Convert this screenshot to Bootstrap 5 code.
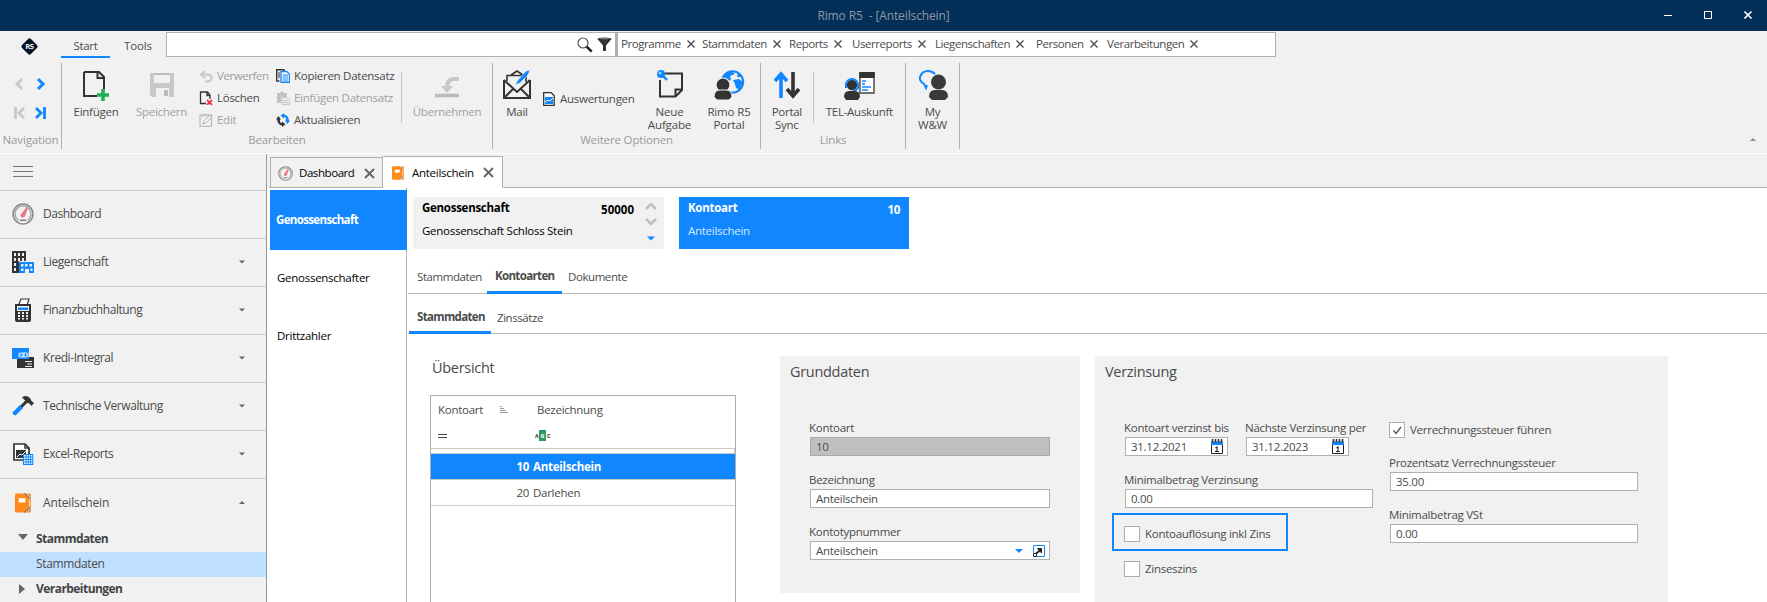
<!DOCTYPE html>
<html lang="de">
<head>
<meta charset="utf-8">
<meta name="viewport" content="width=device-width, initial-scale=1">
<title>Rimo R5 - [Anteilschein]</title>
<link href="https://cdn.jsdelivr.net/npm/bootstrap@5.3.0/dist/css/bootstrap.min.css" rel="stylesheet">
<style>
:root{--blue:#1086ff;--ink:#4b4b4b;--line:#b0b0b0;--soft:#f1f1f1}
body{font:11.5px/16px "Open Sans","Noto Sans",sans-serif;letter-spacing:-.27px;color:var(--ink);background:var(--soft);height:602px;overflow:hidden}
svg{display:block;flex:none}
.tight{letter-spacing:-.6px}
.snug{letter-spacing:-.43px}
.wide-set{letter-spacing:-.15px}
.titlebar{height:31px;background:#042f59;color:#8d98a2}
.titlebar .wintitle{flex:1;text-align:center;line-height:31px;padding-left:158px;font-size:12px;letter-spacing:-.12px}
.wincontrols{width:158px;gap:31px;padding:9px 0 0 55px;height:31px}
.toprow{height:32px;padding-top:1px}
.logo{width:61px;padding:5px 0 0 20px}
.toptab{height:26px;padding:6px 0 0;text-align:center;border-bottom:2px solid transparent}
.toptab.active{border-color:var(--blue)}
.searchbox{width:450px;height:25px;background:#fff;border:1px solid var(--line);padding:4px 3px 0 0}
.quick{width:660px;height:25px;background:#fff;border:1px solid var(--line);border-left-width:2px;padding:3px 0 0 3px;white-space:nowrap;letter-spacing:-.43px}
.quick div{display:flex;align-items:center;height:16px}
.quick svg{margin-left:6px}
.ribbon{height:90px}
.grp{height:86px;border-right:1px solid var(--line);position:relative;display:flex}
.grp .cap{position:absolute;left:0;right:0;top:69px;text-align:center;color:#9a9a9a;letter-spacing:-.15px}
.big{text-align:center;line-height:13px;padding-top:6px;color:var(--ink);white-space:nowrap}
.big svg{margin:0 auto 4px}
.off{color:#a0a0a0!important}
.stack{padding-top:2px;line-height:22px;white-space:nowrap}
.stack div{display:flex;align-items:center;height:22px}
.vsep{width:1px;height:51px;margin-top:9px;background:#c4c4c4}
.main{height:449px;border-top:1px solid #fff}
.side{width:267px;border-right:1px solid #999;height:448px;flex:none}
.side .burger{height:37px;border-bottom:1px solid #d0d0d0;padding:12px 13px}
.side .entry{height:48px;border-bottom:1px solid #d0d0d0;display:flex;align-items:center;padding:0 0 1px 12px;font-size:12px;letter-spacing:-.43px}
.side .entry svg:first-child{margin-right:9px}
.side .entry .caret{margin:0 21px 0 auto}
.side .sub{height:25px;display:flex;align-items:center;font-size:12px;letter-spacing:-.35px;padding:0 0 1px 36px}
.side .sub.picked{background:#bfe0ff}
.side .sub b{color:#444;letter-spacing:-.55px}
.side .sub.parent{padding-left:17px}
.side .sub.parent svg{margin-right:7px}
.content{flex:1;min-width:0;display:flex;flex-direction:column}
.doctabs{height:34px;padding:2px 0 0 2px}
.doctabs .dt{border:1px solid var(--line);color:#000;display:flex;align-items:center;white-space:nowrap}
.dt1{height:31px;width:113px;margin-top:1px;padding:1px 0 0 7px}
.dt2{height:32px;width:120px;background:#fff;border-bottom-color:#fff!important;border-left:0!important;padding:1px 0 0 9px}
.doctabs .rest{flex:1;height:32px;border-bottom:1px solid var(--line)}
.doctabs .edge{width:1px;height:32px;border-bottom:1px solid var(--line)}
.body-area{background:#fff;flex:1;min-height:0;overflow:hidden}
.levels{width:140px;flex:none;border-right:1px solid #b4b4b4;padding:2px 0 0 3px;color:#000}
.levels div{height:58px;padding:20px 0 0 7px}
.levels .now{height:60px;background:var(--blue);color:#fff;font-weight:700;padding:22px 0 0 6px;margin-right:-1px;letter-spacing:-.65px}
.work{flex:1;min-width:0}
.infocards{padding:9px 0 0 6px;gap:15px}
.info{height:52px;padding:3px 9px}
.info .under{padding-top:7px}
.tabline{border-bottom:1px solid #b8b8b8;margin-left:1px;white-space:nowrap;letter-spacing:-.43px}
.tabline div{border-bottom:3px solid transparent;margin-bottom:-1px}
.tabline .active{border-color:var(--blue);font-weight:700;letter-spacing:-.65px}
.head{font-size:14.5px;line-height:18px;letter-spacing:-.3px;height:20px}
.grid-box{width:306px;height:240px;border:1px solid #adadad;background:#fff}
.panelbox{background:#f1f1f1;padding:7px 10px 0;flex:none}
.lab{height:16px;line-height:16px;white-space:nowrap;margin:0 0 1px -1px}
.fld{height:19px;line-height:17px;border:1px solid var(--line);background:#fff;padding:0 5px;display:flex;align-items:center;justify-content:space-between}
.fld.ro{background:#bfbfbf;border-color:#aaa}
.fgap{margin-bottom:16px}
.chk{width:16px;height:16px;border:1px solid #adadad;background:#fff;flex:none;margin-right:5px}
.ring{border:2px solid var(--blue);width:176px;height:38px;margin:5px 0 0 -13px;padding:3px 0 0 10px}
</style>
</head>
<body>
<svg width="0" height="0" class="position-absolute">
<defs>
<symbol id="x" viewBox="0 0 8 8"><path d="M.5.5l7 7M7.500.5l-7 7" stroke="#4a4a4a" stroke-width="1.400" fill="none"/></symbol>
<symbol id="xl" viewBox="0 0 11 11"><path d="M1 1l9 9M10 1l-9 9" stroke="#666" stroke-width="1.900" fill="none"/></symbol>
<symbol id="down" viewBox="0 0 6 4"><path d="M0 .5h6L3 3.500z" fill="#666"/></symbol>
<symbol id="drop" viewBox="0 0 8 4"><path d="M0 0h8L4 4z" fill="#1086ff"/></symbol>
<symbol id="gauge" viewBox="0 0 22 22"><circle cx="11" cy="11" r="10" fill="none" stroke="#888" stroke-width="1.500"/><path d="M6.500 17.500a8 8 0 1 1 9 0" fill="none" stroke="#999" stroke-width="1.300"/><path d="M14.600 4.200l1.400.6-3 8a2.200 2.200 0 1 1-3.400-2.300z" fill="#ec7384"/><path d="M8 17.300h6" stroke="#777" stroke-width="1.400"/></symbol>
<symbol id="folder" viewBox="0 0 17 21"><path d="M.8.5h10L15 5v11l-4.200 4.500H.8L0 19.700V1.300z" fill="#ff8c1a"/><path d="M12.500.5H17v5zM17 15.500v5h-4.500zM15.700 6H17v9h-1.300z" fill="#ffa54a"/><path d="M10.500.5l6 6M10.500 20.500l6-6" stroke="#555" stroke-width="1.100" stroke-dasharray="2 .6"/><path d="M13.500.5l3 3M13.500 20.500l3-3" stroke="#777" stroke-width=".7"/><rect x="4" y="5.500" width="7" height="4.500" fill="#fff"/></symbol>
<symbol id="cal" viewBox="0 0 12 15"><path d="M.5 6v8.500h11V6" fill="#fff" stroke="#222"/><path d="M0 2.500h12V6H0z" fill="#1086ff"/><path d="M1.500 0v3.500M4.500 0v3.500M7.500 0v3.500M10.500 0v3.500" stroke="#333" stroke-width="1.600"/><path d="M4.500 9l1.500-1v4.500M4 12.500h4" stroke="#222" fill="none" stroke-width="1.100"/></symbol>
</defs>
</svg>

<header class="titlebar d-flex">
 <div class="wintitle">Rimo R5&nbsp; - [Anteilschein]</div>
 <div class="wincontrols d-flex">
  <svg width="9" height="12"><path d="M0 6.500h8" stroke="#fff"/></svg>
  <svg width="9" height="12"><path d="M.5 2.500h7v7h-7z" stroke="#fff" fill="none"/></svg>
  <svg width="9" height="12"><path d="M.5 2.500l7 7m0-7l-7 7" stroke="#fff" stroke-width="1.600"/></svg>
 </div>
</header>

<nav class="toprow d-flex">
 <div class="logo"><svg width="19" height="19" viewBox="0 0 19 19"><rect x="3.200" y="3.200" width="12.600" height="12.600" rx="2" transform="rotate(45 9.500 9.500)" fill="#061427"/><text x="9.500" y="12.300" text-anchor="middle" font-family="Open Sans" font-weight="700" font-size="7.500" fill="#e8eef5">R5</text></svg></div>
 <div class="toptab active" style="width:49px">Start</div>
 <div class="toptab wide-set" style="width:56px">Tools</div>
 <div class="searchbox d-flex justify-content-end">
  <svg width="16" height="16" viewBox="0 0 16 16"><circle cx="6" cy="6" r="5" fill="#fff" stroke="#555" stroke-width="1.200"/><path d="M9.700 9.700l5 5" stroke="#222" stroke-width="2.600"/></svg>
  <svg class="ms-1" width="15" height="15" viewBox="0 0 15 15"><path d="M.5 2h14L9 8.500V14H6V8.500z" fill="#333"/><ellipse cx="7.500" cy="2" rx="7" ry="1.500" fill="#333"/><ellipse cx="7.500" cy="1.700" rx="4.500" ry=".6" fill="#888"/></svg>
 </div>
 <div class="quick d-flex">
  <div style="width:81px">Programme<svg width="8" height="8"><use href="#x"/></svg></div>
  <div style="width:87px">Stammdaten<svg width="8" height="8"><use href="#x"/></svg></div>
  <div style="width:63px">Reports<svg width="8" height="8"><use href="#x"/></svg></div>
  <div style="width:83px">Userreports<svg width="8" height="8"><use href="#x"/></svg></div>
  <div style="width:101px">Liegenschaften<svg width="8" height="8"><use href="#x"/></svg></div>
  <div style="width:71px">Personen<svg width="8" height="8"><use href="#x"/></svg></div>
  <div>Verarbeitungen<svg width="8" height="8"><use href="#x"/></svg></div>
 </div>
</nav>

<section class="ribbon d-flex">
 <div class="grp" style="width:62px">
  <svg width="61" height="62" viewBox="0 0 61 62" fill="none"><path d="M22 16l-5 5 5 5" stroke="#c8c8c8" stroke-width="2.800"/><path d="M38 16l5 5-5 5" stroke="#1086ff" stroke-width="3"/><path d="M24 45l-5 5 5 5M15.500 44v12" stroke="#c8c8c8" stroke-width="2.800"/><path d="M36 45l5 5-5 5M44.500 44v12" stroke="#1086ff" stroke-width="2.800"/></svg>
  <div class="cap">Navigation</div>
 </div>
 <div class="grp" style="width:431px">
  <div class="big" style="width:68px"><svg width="28" height="32" viewBox="0 0 28 32"><path d="M2 3h15l5 5v12M15 27H2V3M15.500 3v6h6" fill="none" stroke="#333" stroke-width="2"/><path d="M21 20v12M15 26h12" stroke="#1fae54" stroke-width="3.600"/></svg>Einfügen</div>
  <div class="big off" style="width:63px"><svg width="24" height="32" viewBox="0 0 24 32"><path d="M0 4h24v24H2l-2-2z" fill="#c8c8c8"/><path d="M4 4h16v10H4zM6 19h13v9H6z" fill="#f1f1f1"/><path d="M4 4h16v2H4zM14 21h4v6h-4z" fill="#bbb"/></svg>Speichern</div>
  <div class="stack" style="width:77px;padding-left:6px">
   <div class="off snug"><svg class="me-1" width="14" height="14" viewBox="0 0 14 14"><path d="M6 2L2 5.500 6 9M2 5.500h7a3 3 0 0 1 0 7H6" fill="none" stroke="#c8c8c8" stroke-width="2"/></svg>Verwerfen</div>
   <div><svg class="me-1" width="14" height="14" viewBox="0 0 14 14"><path d="M7 12.500H1.500V1h7L11 4v4M8 1v3.500h3" fill="none" stroke="#333" stroke-width="1.300"/><path d="M8 9l5 5m0-5l-5 5" stroke="#ee3347" stroke-width="1.800"/></svg>Löschen</div>
   <div class="off"><svg class="me-1" width="14" height="14" viewBox="0 0 14 14"><path d="M1 2h11.500v11.500H1z" fill="none" stroke="#c0c0c0" stroke-width="1.300"/><path d="M3 1v3M6 1v3M9 1v3" stroke="#c0c0c0"/><path d="M4 11l1-3 6-6 2 2-6 6z" fill="#f1f1f1" stroke="#b4b4b4"/></svg>Edit</div>
  </div>
  <div class="stack" style="width:131px;padding-left:6px">
   <div><svg class="me-1" width="14" height="14" viewBox="0 0 14 14"><path d="M3.500 12H.7V.7h7L9 2" fill="none" stroke="#333" stroke-width="1.400"/><path d="M2 4h2M2 6h2M2 8h2" stroke="#333"/><path d="M5 2.700h6L13.400 5v8.400H5z" fill="#fff" stroke="#1086ff" stroke-width="1.300"/><path d="M6.500 6h5.500M6.500 8h5.500M6.500 10h5.500M6.500 12h5.500" stroke="#1086ff"/></svg>Kopieren Datensatz</div>
   <div class="off"><svg class="me-1" width="14" height="14" viewBox="0 0 14 14"><path d="M1 2h3l2-2 2 2h3v4H5v6H1z" fill="#c2c2c2"/><path d="M6 6.600h5L13.400 9v4.400H6z" fill="#f1f1f1" stroke="#c2c2c2"/><path d="M7 9.500h5M7 11.500h5" stroke="#c2c2c2"/></svg>Einfügen Datensatz</div>
   <div><svg class="me-1" width="14" height="14" viewBox="0 0 14 14"><path d="M7 2.500a4.500 4.500 0 0 1 4.500 4.500v1" stroke="#1086ff" stroke-width="2.600" fill="none"/><path d="M8 0v5.500L4.500 2.700zM9 7.500h5l-2.500 3.500z" fill="#1086ff"/><path d="M7 11.500A4.500 4.500 0 0 1 2.500 7V6" stroke="#333" stroke-width="2.600" fill="none"/><path d="M6 8.500V14l3.500-2.700zM5 6.500H0L2.500 3z" fill="#333"/></svg>Aktualisieren</div>
  </div>
  <div class="vsep"></div>
  <div class="big off" style="width:90px"><svg width="26" height="32" viewBox="0 0 26 32"><path d="M1 26.500h24" stroke="#bbb" stroke-width="3.600"/><path d="M25 10h-5q-7 0-7 8" fill="none" stroke="#c8c8c8" stroke-width="4"/><path d="M7 17h12l-6 7z" fill="#c8c8c8"/></svg>Übernehmen</div>
  <div class="cap">Bearbeiten</div>
 </div>
 <div class="grp" style="width:268px">
  <div class="big" style="width:48px"><svg width="28" height="32" viewBox="0 0 28 32"><path d="M1 11v18h26V11M1 11l13 12 13-12M1 29l9-9M27 29l-9-9" fill="none" stroke="#333" stroke-width="2"/><path d="M4 12V6.500h19V13M8 6l6-4 6 4" fill="none" stroke="#333" stroke-width="1.600"/><path d="M12 16l3-5 8-9 4-1-2 5-8 8z" fill="#1086ff" stroke="#f1f1f1" stroke-width=".6"/></svg>Mail</div>
  <div class="d-flex align-items-center" style="width:100px;height:72px;padding-left:2px"><svg width="12" height="14" viewBox="0 0 12 14"><path d="M.7.700h7.500l3 3v9.600H.7z" fill="#fff" stroke="#333" stroke-width="1.300"/><path d="M2 5h8v7H2z" fill="#1086ff"/><path d="M2 10l3-2 2 1 3-3" stroke="#fff" fill="none"/></svg><span class="ms-1" style="padding-left:1px">Auswertungen</span></div>
  <div class="big wide-set" style="width:57px"><svg width="28" height="32" viewBox="0 0 28 32"><path d="M9 4.500h17V21l-6.500 6.500H4V11M26 20.500h-6.500v7" fill="none" stroke="#333" stroke-width="2"/><circle cx="5" cy="5" r="4" fill="#1086ff"/><path d="M7 7l4 4" stroke="#1086ff" stroke-width="2.400"/><circle cx="4" cy="4" r="1.500" fill="#9ccfff"/></svg>Neue<br>Aufgabe</div>
  <div class="big wide-set" style="width:62px"><svg width="32" height="32" viewBox="0 0 32 32"><circle cx="19.500" cy="13" r="10.700" fill="#f1f1f1" stroke="#1086ff" stroke-width="2"/><path d="M10 7q5-5 9-4l3 2-5 2 1 4-5 2-4-3zM20 11l6-1 4 3-3 8-4-2-1-4zM25 4l4 4-5 0z" fill="#1086ff"/><circle cx="10" cy="16" r="7" fill="#333" stroke="#f1f1f1" stroke-width="1.200"/><path d="M1 28q0-7 6-7h6q6 0 6 7l-3 3H4z" fill="#333" stroke="#f1f1f1"/></svg>Rimo R5<br>Portal</div>
  <div class="cap">Weitere Optionen</div>
 </div>
 <div class="grp" style="width:145px">
  <div class="big" style="width:52px"><svg width="28" height="32" viewBox="0 0 28 32"><path d="M20 3v22" stroke="#333" stroke-width="3.600"/><path d="M8 29V6M2 12l6-7 6 7" fill="none" stroke="#1086ff" stroke-width="3.600"/><path d="M14 20l6 7 6-7" fill="none" stroke="#333" stroke-width="3.600"/></svg>Portal<br>Sync</div>
  <div class="vsep"></div>
  <div class="big" style="width:92px"><svg width="32" height="32" viewBox="0 0 32 32"><path d="M17 4h14v20H17z" fill="#fff" stroke="#444" stroke-width="1.400"/><path d="M16.300 3h15.400v6H16.300z" fill="#333"/><path d="M19 12h4M19 15h3M19 18h9M19 21h6" stroke="#1086ff" stroke-width="1.300"/><circle cx="9" cy="16" r="5.200" fill="#333"/><path d="M3 16a6 6 0 0 1 12 0M3 14v5M15 14v5q-2 3-5 2" fill="none" stroke="#1086ff" stroke-width="2"/><path d="M1 28q0-6 5-6h6q5 0 5 6l-2 3H3z" fill="#333"/></svg>TEL-Auskunft</div>
  <div class="cap">Links</div>
 </div>
 <div class="grp" style="width:54px">
  <div class="big" style="width:53px"><svg width="30" height="32" viewBox="0 0 30 32"><path d="M9 16l-1 3-2-4Q1 12 2 8q2-6 8-6 4 0 7 3" fill="none" stroke="#1086ff" stroke-width="2"/><circle cx="20.500" cy="13" r="7.500" fill="#3a3a3a"/><path d="M11 28q0-7 6-7h7q6 0 6 7l-3 3H14z" fill="#3a3a3a"/></svg>My<br>W&amp;W</div>
 </div>
 <div class="flex-grow-1 d-flex justify-content-end align-items-end" style="padding:0 11px 11px 0"><svg width="6" height="4"><path d="M0 3h6L3 0z" fill="#888"/></svg></div>
</section>

<main class="main d-flex">
 <aside class="side">
  <div class="burger"><svg width="20" height="12"><path d="M0 .5h20M0 5.500h20M0 10.500h20" stroke="#777"/></svg></div>
  <div class="entry"><svg width="22" height="22"><use href="#gauge"/></svg>Dashboard</div>
  <div class="entry"><svg width="22" height="22" viewBox="0 0 22 22"><path d="M0 0h14v10H7v12H0z" fill="#333"/><path d="M2 2h2v3H2zM6 2h2v3H6zM10 2h2v3h-2zM2 7h2v3H2zM6 7h2v3H6zM10 7h2v3h-2zM2 12h2v3H2zM2 17h2v3H2z" fill="#f1f1f1"/><path d="M7 11h15v11h-5v-4h-4v4H7z" fill="#1086ff"/><path d="M9 13h2.500v2.500H9zM13 13h2.500v2.500H13zM17.500 13H20v2.500h-2.500zM9 17.500h2.500V20H9zM18.500 17.500h2V20h-2z" fill="#f1f1f1"/></svg>Liegenschaft<svg class="caret" width="6" height="4"><use href="#down"/></svg></div>
  <div class="entry"><svg width="22" height="24" viewBox="0 0 22 24"><path d="M4 7h14v15q0 1-1 1H5q-1 0-1-1z" fill="#f1f1f1" stroke="#333" stroke-width="2"/><path d="M7 6l2-5h8l-2 6" fill="#fff" stroke="#333" stroke-width="1.200"/><path d="M3 6h16v2H3zM5 13h12v9H5z" fill="#333"/><path d="M6 9.500h10v2.500H6z" fill="#1086ff"/><path d="M6 14h2v2H6zM10 14h2v2h-2zM14 14h2v2h-2zM6 17h2v2H6zM10 17h2v2h-2zM14 17h2v2h-2zM6 20h2v1.500H6zM10 20h2v1.500h-2zM14 20h2v1.500h-2z" fill="#f1f1f1"/></svg>Finanzbuchhaltung<svg class="caret" width="6" height="4"><use href="#down"/></svg></div>
  <div class="entry"><svg width="22" height="20" viewBox="0 0 22 20"><path d="M5 9h17v11H5z" fill="#333"/><path d="M0 0h17v11H0z" fill="#1086ff"/><circle cx="10" cy="7" r="2.200" fill="none" stroke="#fff"/><circle cx="13" cy="7" r="2.200" fill="none" stroke="#fff"/><path d="M7 4.500v5M16 4.500v5" stroke="#fff" stroke-width=".8"/><path d="M13 13.500h7M15 16h5M13 18.500h7" stroke="#f1f1f1" stroke-width="1.200"/></svg>Kredi-Integral<svg class="caret" width="6" height="4"><use href="#down"/></svg></div>
  <div class="entry"><svg width="22" height="20" viewBox="0 0 22 20"><path d="M8.500 11.500L3 17" stroke="#1086ff" stroke-width="4.500" stroke-linecap="round"/><path d="M9.500 10.500L15 5" stroke="#333" stroke-width="3"/><path d="M10 1.500q4-3 8 .5l1.500 3L22 7l-2.500 3-2-2.500-2-.5-3-3q-1-1.500-2.500-2.500z" fill="#333"/></svg>Technische Verwaltung<svg class="caret" width="6" height="4"><use href="#down"/></svg></div>
  <div class="entry"><svg width="22" height="22" viewBox="0 0 22 22"><path d="M2 1h11l4 4v12H2z" fill="#fff" stroke="#333" stroke-width="1.700"/><path d="M13 1v4h4" stroke="#333" fill="none" stroke-width="1.500"/><path d="M4 7h10v8H4z" fill="#333"/><path d="M5 14l3-3 2 1 4-4" stroke="#fff" fill="none"/><path d="M11 11h10v11H11z" fill="#fff"/><path d="M11 11.500h10M11 14h10M11 16.500h10M11 19h10M11 21.500h10M11.500 11v11M14 11v11M16.300 11v11M18.600 11v11M20.800 11v11" stroke="#1086ff"/></svg>Excel-Reports<svg class="caret" width="6" height="4"><use href="#down"/></svg></div>
  <div class="entry border-0"><svg width="22" height="20" viewBox="-2.500 0 22 21"><use href="#folder" width="17" height="21"/></svg><span class="wide-set">Anteilschein</span><svg class="caret" width="6" height="4"><path d="M0 3h6L3 0z" fill="#666"/></svg></div>
  <div class="sub parent"><svg width="12" height="12"><path d="M1 1h10L6 7z" fill="#666"/></svg><b>Stammdaten</b></div>
  <div class="sub picked">Stammdaten</div>
  <div class="sub parent"><svg width="12" height="12"><path d="M2 1v10l6-5z" fill="#666"/></svg><b>Verarbeitungen</b></div>
 </aside>

 <div class="content">
  <div class="doctabs d-flex">
   <div class="edge"></div>
   <div class="dt dt1"><svg width="15" height="15" viewBox="0 0 22 22"><use href="#gauge" width="22" height="22"/></svg><span class="snug" style="width:64px;margin-left:6px">Dashboard</span><svg width="11" height="11" style="margin-left:1px"><use href="#xl"/></svg></div>
   <div class="dt dt2"><svg width="12" height="14" viewBox="0 0 17 21" preserveAspectRatio="none"><use href="#folder" width="17" height="21"/></svg><span style="width:71px;margin-left:8px">Anteilschein</span><svg width="11" height="11"><use href="#xl"/></svg></div>
   <div class="rest"></div>
  </div>
  <div class="body-area d-flex">
   <div class="levels"><div class="now">Genossenschaft</div><div>Genossenschafter</div><div>Drittzahler</div></div>
   <div class="work">
    <div class="infocards d-flex">
     <div class="info d-flex" style="width:251px;background:#f1f1f1;color:#000">
      <div class="flex-grow-1"><b>Genossenschaft</b><div class="under">Genossenschaft Schloss Stein</div></div>
      <b style="padding-top:2px;letter-spacing:0">50000</b>
      <svg style="margin:3px -3px 0 10px" width="14" height="40" viewBox="0 0 14 40" fill="none"><path d="M2 7l5-5 5 5M2 17l5 5 5-5" transform="translate(0 -1)" stroke="#c0c0c0" stroke-width="2.600"/><path d="M3 33.500h8l-4 4z" fill="#1086ff"/></svg>
     </div>
     <div class="info d-flex justify-content-between" style="width:230px;background:#1086ff;color:#fff">
      <div><b>Kontoart</b><div class="under" style="color:#d4e9ff">Anteilschein</div></div>
      <b style="padding-top:2px">10</b>
     </div>
    </div>
    <div class="tabline d-flex" style="height:45px">
     <div style="width:79px;padding:20px 0 0 9px">Stammdaten</div>
     <div class="active" style="width:75px;padding:19px 0 0 8px">Kontoarten</div>
     <div style="padding:20px 0 0 6px">Dokumente</div>
    </div>
    <div class="tabline d-flex" style="height:40px">
     <div class="active" style="width:82px;padding:15px 0 0 8px;margin-left:1px">Stammdaten</div>
     <div style="padding:16px 0 0 6px">Zinssätze</div>
    </div>
    <div class="d-flex" style="padding-left:23px">
     <div style="width:350px;padding-top:25px;flex:none">
      <div class="head" style="padding-left:2px">Übersicht</div>
      <div class="grid-box" style="margin-top:16px">
       <div class="d-flex align-items-center" style="height:27px;padding-left:7px"><span style="width:62px">Kontoart</span><svg width="37" height="8"><path d="M0 .5h2M0 2.500h4M0 4.500h6M0 6.500h8" stroke="#999"/></svg>Bezeichnung</div>
       <div class="d-flex align-items-center" style="height:25px;padding-left:7px"><svg width="97" height="6"><path d="M0 1.500h9M0 4.500h9" stroke="#444"/></svg>
        <svg width="16" height="12" viewBox="0 0 16 12"><rect x="4" width="7" height="11" fill="#2f9a5f"/><g font-family="Liberation Mono" font-weight="700" font-size="6"><text x="0" y="8" fill="#333">A</text><text x="5.700" y="8" fill="#fff">B</text><text x="12" y="8" fill="#333">C</text></g></svg></div>
       <div style="height:6px;border:1px solid #ccc;border-left:0"></div>
       <div class="d-flex align-items-center fw-bold text-white" style="height:25px;background:#1086ff"><span class="text-end" style="width:98px">10</span><span style="margin-left:4px">Anteilschein</span></div>
       <div class="d-flex align-items-center" style="height:27px;border:solid #ccc;border-width:1px 0"><span class="text-end" style="width:98px">20</span><span style="margin-left:4px">Darlehen</span></div>
      </div>
     </div>
     <div class="panelbox" style="width:300px;height:237px;margin-top:22px">
      <div class="head">Grunddaten</div>
      <div style="padding:37px 20px 0 20px">
       <div class="lab">Kontoart</div><div class="fld ro fgap">10</div>
       <div class="lab">Bezeichnung</div><div class="fld fgap">Anteilschein</div>
       <div class="lab">Kontotypnummer</div><div class="fld" style="padding-right:4px"><span>Anteilschein</span><span class="d-flex align-items-center" style="gap:10px"><svg width="8" height="4"><use href="#drop"/></svg><svg width="12" height="12"><path d="M.5 8V.5h11v11H4" fill="#fff" stroke="#1086ff"/><path d="M3 8.500l4-3" stroke="#222" stroke-width="2"/><path d="M4.500 3.500H8.500V8z" stroke="#222" fill="#222"/><path d="M.5 8.500h3v3h-3z" stroke="#222" fill="#fff"/></svg></span></div>
      </div>
     </div>
     <div class="panelbox" style="width:573px;height:260px;margin:22px 0 0 15px">
      <div class="head">Verzinsung</div>
      <div class="d-flex">
       <div style="width:248px;margin:37px 17px 0 20px">
        <div class="d-flex" style="height:52px">
         <div style="width:121px;flex:none"><div class="lab">Kontoart verzinst bis</div><div class="fld" style="width:103px;padding-right:4px">31.12.2021<svg width="12" height="15"><use href="#cal"/></svg></div></div>
         <div style="width:103px;flex:none"><div class="lab">Nächste Verzinsung per</div><div class="fld" style="padding-right:4px">31.12.2023<svg width="12" height="15"><use href="#cal"/></svg></div></div>
        </div>
        <div class="lab">Minimalbetrag Verzinsung</div><div class="fld">0.00</div>
        <div class="ring d-flex align-items-center"><span class="chk"></span>Kontoauflösung inkl Zins</div>
        <div class="d-flex align-items-center" style="margin:10px 0 0 -1px"><span class="chk"></span>Zinseszins</div>
       </div>
       <div style="width:248px;margin-top:39px">
        <div class="d-flex align-items-center" style="margin-left:-1px"><span class="chk d-flex"><svg width="14" height="14"><path d="M3.500 7.500L6 10.500 11 4" fill="none" stroke="#555" stroke-width="1.300"/></svg></span>Verrechnungssteuer führen</div>
        <div class="lab" style="margin-top:17px">Prozentsatz Verrechnungssteuer</div><div class="fld fgap">35.00</div>
        <div class="lab">Minimalbetrag VSt</div><div class="fld">0.00</div>
       </div>
      </div>
     </div>
    </div>
   </div>
  </div>
 </div>
</main>
<script src="https://cdn.jsdelivr.net/npm/bootstrap@5.3.0/dist/js/bootstrap.bundle.min.js"></script>
</body>
</html>
